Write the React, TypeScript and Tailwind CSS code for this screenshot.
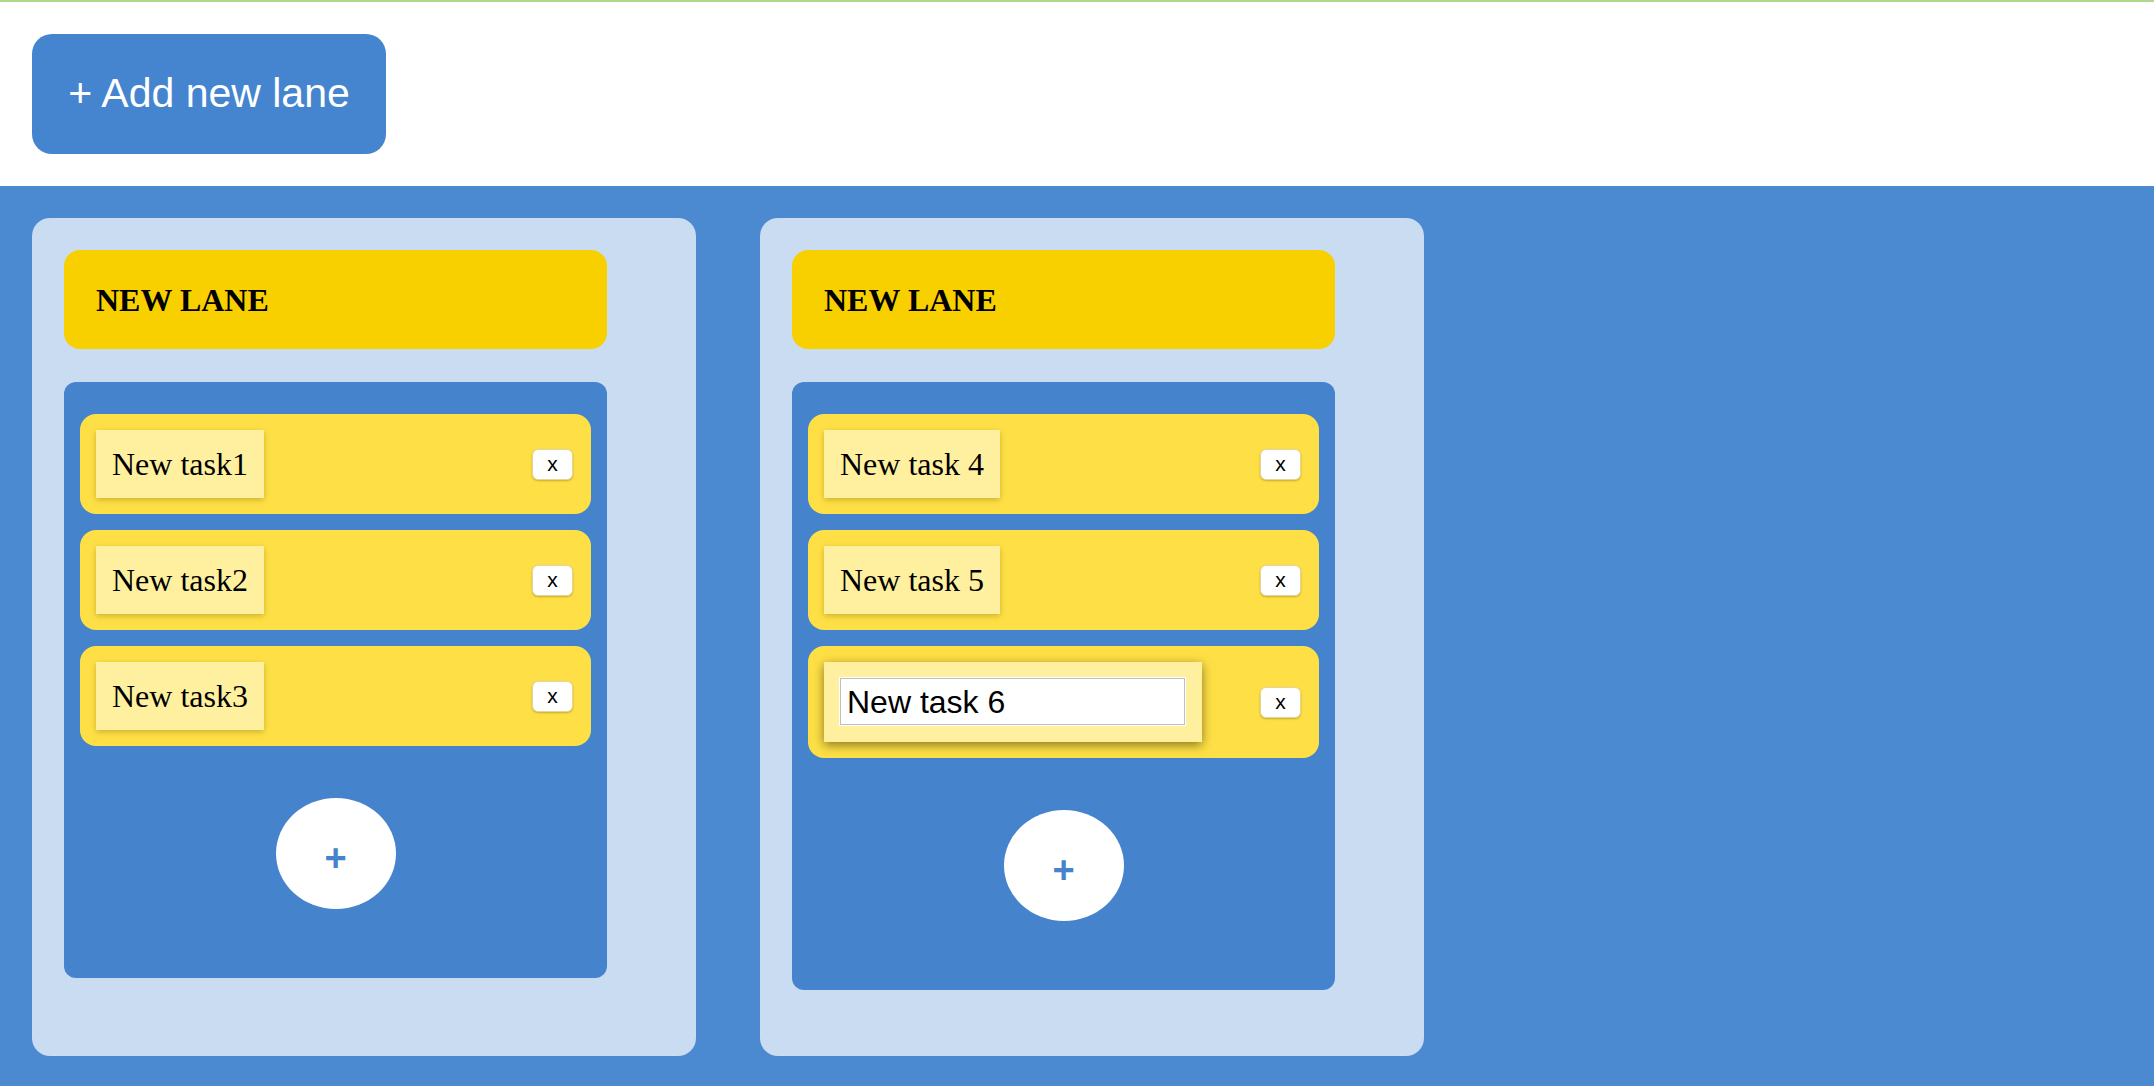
import React from 'react'

type Task = { id: number; title: string; editing?: boolean }
type Lane = { id: number; title: string; tasks: Task[] }

const LANES: Lane[] = [
  {
    id: 1,
    title: 'NEW LANE',
    tasks: [
      { id: 1, title: 'New task1' },
      { id: 2, title: 'New task2' },
      { id: 3, title: 'New task3' },
    ],
  },
  {
    id: 2,
    title: 'NEW LANE',
    tasks: [
      { id: 4, title: 'New task 4' },
      { id: 5, title: 'New task 5' },
      { id: 6, title: 'New task 6', editing: true },
    ],
  },
]

function TaskCard({ task }: { task: Task }) {
  return (
    <div className="flex items-center justify-between rounded-2xl bg-[#fee046] pl-4 pr-[18px] pt-4 pb-4">
      {task.editing ? (
        <div className="bg-[#fff0a0] p-4 pb-[17px] pr-[17px] shadow-[0_3px_10px_rgba(60,45,0,0.6)]">
          <input
            defaultValue={task.title}
            className="block h-[47px] w-[345px] border border-[#bfbfbf] bg-white pl-[6px] font-['Liberation_Sans',Arial,sans-serif] text-[32px] text-black shadow-[0_0_0_1px_#fff] outline-none"
          />
        </div>
      ) : (
        <div className="bg-[#fff0a0] px-4 py-[14px] font-['Liberation_Serif','Times_New_Roman',serif] text-[32px] leading-[40px] text-black shadow-[0_2px_6px_rgba(120,90,0,0.35)]">
          {task.title}
        </div>
      )}
      <button className="flex h-[31px] w-[41px] items-center justify-center rounded-md border border-[#e2d6a0] bg-white pb-[2px] font-['Liberation_Sans',Arial,sans-serif] text-[21px] leading-none text-black shadow-[0_1px_2px_rgba(120,90,0,0.4)]">
        x
      </button>
    </div>
  )
}

function LaneColumn({ lane }: { lane: Lane }) {
  return (
    <div className="w-[664px] rounded-[18px] bg-[#c9dcf1] pl-8 pr-[89px] pt-8 pb-[66px]">
      <div className="flex h-[99px] items-center rounded-2xl bg-[#f8d000] pl-8 font-['Liberation_Serif','Times_New_Roman',serif] text-[32px] font-bold text-black">
        {lane.title}
      </div>
      <div className="mt-[33px] rounded-xl bg-[#4584cd] px-4 pt-8 pb-[69px]">
        <div className="flex flex-col gap-4">
          {lane.tasks.map((t) => (
            <TaskCard key={t.id} task={t} />
          ))}
        </div>
        <button className="mx-auto mt-[52px] flex h-[111px] w-[120px] items-center justify-center rounded-[50%] bg-white pt-2 font-['Liberation_Sans',Arial,sans-serif] text-[38px] font-bold leading-none text-[#4584cd]">
          +
        </button>
      </div>
    </div>
  )
}

export default function App() {
  return (
    <div className="flex min-h-screen flex-col bg-white">
      <div className="h-[2px] bg-[#b0d98e]" />
      <div className="px-8 pt-8 pb-8">
        <button className="flex h-[120px] w-[354px] items-center justify-center rounded-[20px] bg-[#4584cf] font-['Liberation_Sans',Arial,sans-serif] text-[41px] text-white">
          + Add new lane
        </button>
      </div>
      <div className="flex flex-1 items-stretch gap-16 bg-[#4b89d0] px-8 pt-8 pb-[31px]">
        {LANES.map((l) => (
          <LaneColumn key={l.id} lane={l} />
        ))}
      </div>
    </div>
  )
}
